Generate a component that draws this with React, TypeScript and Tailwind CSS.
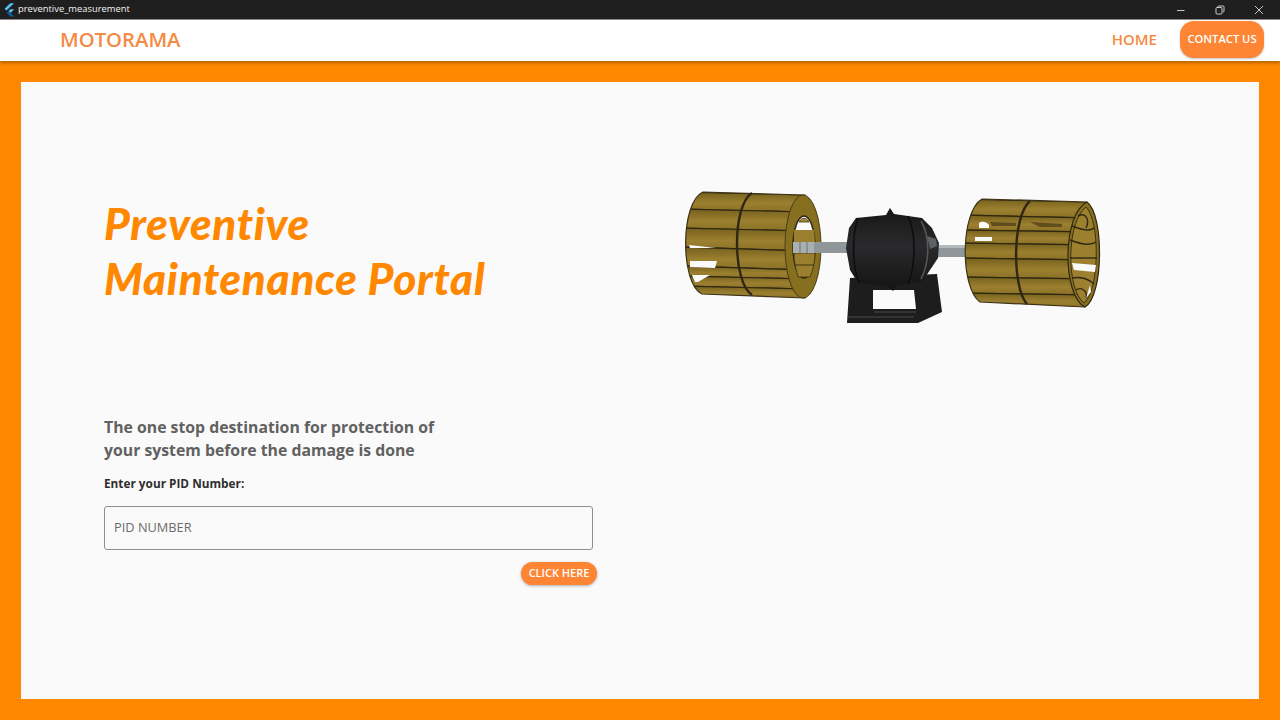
// y of each blade edge at the back and at the front of the wheel
const leftBands = [
  [192, 195],
  [209, 212],
  [228, 231],
  [247, 251],
  [266, 270],
  [276, 279],
  [286, 289],
  [296, 299],
];
const rightBands = [
  [199, 202],
  [215, 218],
  [230, 232],
  [243, 245],
  [258, 260],
  [277, 279],
  [293, 295],
  [303, 308],
];
const rightInner = [
  'M1078 216 C1086 212 1090 220 1086 228',
  'M1072 226 C1082 230 1090 232 1094 228',
  'M1070 240 C1080 244 1090 246 1096 242',
  'M1070 258 L1097 258',
  'M1072 278 C1082 276 1090 280 1094 284',
  'M1076 290 C1082 286 1088 292 1086 298',
];

function Bands({ bands, x1, x2 }: { bands: number[][]; x1: number; x2: number }) {
  return (
    <>
      {bands.slice(0, -1).map((b, i) => {
        const next = bands[i + 1];
        return (
          <path
            key={b[0]}
            d={`M${x1} ${b[0]} L${x2} ${b[1]} L${x2} ${next[1]} L${x1} ${next[0]} Z`}
            fill="url(#blade)"
            stroke="#2f2711"
            strokeWidth="1.2"
          />
        );
      })}
    </>
  );
}

function BlowerArt() {
  return (
    <svg viewBox="680 185 430 145" className="h-[145px] w-[430px] shrink-0">
      <defs>
        <linearGradient id="blade" x1="0" y1="0" x2="0" y2="1">
          <stop offset="0" stopColor="#75601d" />
          <stop offset="0.55" stopColor="#9c8030" />
          <stop offset="1" stopColor="#8a7026" />
        </linearGradient>
        <linearGradient id="motor" x1="0" y1="0" x2="0" y2="1">
          <stop offset="0" stopColor="#161617" />
          <stop offset="0.45" stopColor="#2a2a2c" />
          <stop offset="1" stopColor="#131314" />
        </linearGradient>
        <clipPath id="leftBody">
          <path d="M703 192 L805 195 L805 298 L702 294 C680 284 680 202 703 192 Z" />
        </clipPath>
        <clipPath id="rightBody">
          <path d="M982 199 L1087 202 L1085 307 L980 302 C960 288 960 212 982 199 Z" />
        </clipPath>
      </defs>

      {/* left wheel */}
      <g clipPath="url(#leftBody)">
        <Bands bands={leftBands} x1={680} x2={806} />
      </g>
      <path d="M703 192 L805 195 L805 298 L702 294 C680 284 680 202 703 192 Z" fill="none" stroke="#3d3216" strokeWidth="1.2" />
      <path d="M690 261 L717 261 L715 268 L690 267 Z" fill="#fafafa" />
      <path d="M692 275 L710 275 L698 282 L695 282 Z" fill="#fafafa" />
      <path d="M689 245 L716 248 L690 248 Z" fill="#fafafa" />
      <path d="M752 193 C732 205 732 282 752 295" stroke="#2f2711" strokeWidth="2.4" fill="none" />
      <ellipse cx="803" cy="246.5" rx="18" ry="51.5" fill="#86701f" stroke="#4a3c18" strokeWidth="1" />
      <ellipse cx="804" cy="247" rx="11" ry="31" fill="#fafafa" stroke="#2f2711" strokeWidth="1.5" />
      <path d="M799 222 C802 217 806 217 809 222 Z" fill="#a88b37" stroke="#3d3216" strokeWidth="0.8" />
      <path d="M794 230 L814 230 L815 242 L794 242 Z" fill="#9a7f2e" />
      <path d="M794 253 L815 253 C815 262 813 270 810 277 L798 277 C796 270 794 262 794 253 Z" fill="#9a7f2e" stroke="#3d3216" strokeWidth="0.8" />
      <path d="M795 265 L814 265" stroke="#3d3216" strokeWidth="1" />

      {/* shafts */}
      <rect x="793" y="242" width="55" height="11" fill="#8f979a" />
      <rect x="793" y="242" width="21" height="11" fill="#a9b0b2" />
      <path d="M800 242 V253 M807 242 V253" stroke="#6c7375" strokeWidth="1" />
      <rect x="934" y="245" width="36" height="12" fill="#8f979a" />
      <rect x="934" y="245" width="36" height="3" fill="#b4babc" />

      {/* base */}
      <path fillRule="evenodd" d="M850 278 L937 274 L942 312 L918 323 L847 323 Z M873 290 L914 290 L916 309 L873 309 Z" fill="#1d1d1e" />
      <path d="M874 312 L916 312 M848 317 L914 317" stroke="#4a4a4c" strokeWidth="1" />

      {/* motor */}
      <path d="M856 218 L886 215 L890 208 L894 214 L922 218 L932 228 L939 243 L938 258 L930 270 L922 282 L897 285 L893 291 L888 286 L858 283 L850 270 L846 248 L849 228 Z" fill="url(#motor)" />
      <path d="M858 218 C852 235 852 265 859 283 M908 216 C916 232 916 265 908 284" stroke="#0d0d0e" strokeWidth="1.5" fill="none" />
      <path d="M921 221 C930 236 930 262 921 279" stroke="#58585a" strokeWidth="1.5" fill="none" />
      <path d="M927 236 L936 239 L937 246 L930 249 Z" fill="#5f6062" />

      {/* right wheel */}
      <g clipPath="url(#rightBody)">
        <Bands bands={rightBands} x1={960} x2={1090} />
      </g>
      <path d="M982 199 L1087 202 M1085 307 L980 302 C960 288 960 212 982 199" fill="none" stroke="#3d3216" strokeWidth="1.2" />
      <path d="M979 223 C981 221 986 221 989 225 L989 228 L979 228 Z" fill="#fafafa" />
      <path d="M975 237 L992 237 L992 241 L975 241 Z" fill="#fafafa" />
      <path d="M990 222 L1016 223 L1016 226 L992 226 Z M1030 222 L1062 224 L1062 227 L1040 227 Z" fill="#5f4e1c" />
      <path d="M1030 201 C1012 216 1012 288 1027 304" stroke="#2f2711" strokeWidth="2.4" fill="none" />
      <path d="M1087 202 C1104 214 1104 296 1085 307 C1062 296 1062 214 1087 202 Z" fill="#86701f" stroke="#2f2711" strokeWidth="1.2" />
      <path d="M1086 207 C1100 220 1100 290 1084 303 C1066 290 1066 222 1086 207 Z" fill="#9c8030" stroke="#3d3216" strokeWidth="1" />
      {rightInner.map((d) => (
        <path key={d} d={d} stroke="#2f2711" strokeWidth="1.4" fill="none" />
      ))}
      <path d="M1072 263 L1096 265 L1095 272 L1074 270 Z" fill="#fafafa" />
      <path d="M1088 292 L1090 285 L1091 292 L1086 298 Z" fill="#fafafa" />
    </svg>
  );
}

function FlutterLogo() {
  return (
    <svg viewBox="0 0 14 16" className="h-[14px] w-[12px]">
      <path d="M8.5 0 L13 0 L4 8.5 L1.8 6.4 Z" fill="#55c4f1" />
      <path d="M8.5 7 L13 7 L8.8 11.4 L6.5 9.1 Z" fill="#55c4f1" />
      <path d="M4.4 11.2 L6.6 9 L13 15.5 L8.5 15.5 Z" fill="#0b5f9e" />
    </svg>
  );
}

export default function App() {
  return (
    <div className="flex h-screen flex-col overflow-hidden font-['Open_Sans','Noto_Sans',sans-serif]">
      <div className="flex h-5 shrink-0 items-center border-b border-[#8a8a8a] bg-[#1f1f1f] pl-[3px]">
        <FlutterLogo />
        <span className="ml-[3px] text-[9.4px] text-[#f2f2f2]">preventive_measurement</span>
        <div className="ml-auto flex items-center gap-[29px] pr-[16px] text-[#c9c9c9]">
          <svg viewBox="0 0 10 10" className="h-[10px] w-[10px]">
            <path d="M1 5.5 H8.5" stroke="currentColor" strokeWidth="1" />
          </svg>
          <svg viewBox="0 0 10 10" className="h-[10px] w-[10px]">
            <rect x="1" y="2.5" width="6" height="6.5" rx="1" fill="none" stroke="currentColor" strokeWidth="1" />
            <path d="M3 2.5 V1.5 Q3 1 4 1 H8 Q9 1 9 2 V6 Q9 7 8 7" fill="none" stroke="currentColor" strokeWidth="1" />
          </svg>
          <svg viewBox="0 0 10 10" className="h-[10px] w-[10px]">
            <path d="M1 1 L9 9 M9 1 L1 9" stroke="currentColor" strokeWidth="1" />
          </svg>
        </div>
      </div>

      <header className="z-10 flex h-[41px] shrink-0 items-center bg-white pb-[2px] pl-[60px] pr-[16px] shadow-[0_2px_3px_rgba(120,70,0,0.55)]">
        <span className="text-[20.3px] font-semibold text-[#f58a42]">MOTORAMA</span>
        <nav className="ml-auto flex items-center gap-[23px]">
          <span className="text-[15px] font-semibold text-[#f58a42]">HOME</span>
          <span className="flex h-[37px] w-[84px] items-center justify-center rounded-[14px] bg-[#fd8534] text-[11.2px] font-semibold text-white shadow-[0_1px_2px_rgba(0,0,0,0.25)]">
            CONTACT US
          </span>
        </nav>
      </header>

      <main className="min-h-0 flex-1 bg-[#ff8800] p-[21px]">
        <div className="flex h-full bg-[#fafafa] pl-[83px] pt-[114px]">
          <div className="w-[494px] shrink-0">
            <h1 className="font-['Lato',sans-serif] text-[44px] font-black italic leading-[55px] tracking-[0.7px] text-[#ff8800]">
              Preventive
              <br />
              Maintenance Portal
            </h1>
            <p className="mt-[110px] text-[15.8px] font-bold leading-[23px] text-[#616161]">
              The one stop destination for protection of
              <br />
              your system before the damage is done
            </p>
            <p className="mt-[12px] text-[11.8px] font-bold leading-[18px] text-[#2e2e2e]">Enter your PID Number:</p>
            <div className="mt-[14px] flex h-11 w-[489px] items-center rounded-[3px] border border-[#8f8f8f] pl-[9px]">
              <span className="text-[12.8px] text-[#6b6b6b]">PID NUMBER</span>
            </div>
            <div className="mt-3 flex justify-end pr-px">
              <span className="flex h-[23px] w-[76px] items-center justify-center rounded-full bg-[#fd8534] text-[11px] font-semibold text-white shadow-[0_1px_3px_rgba(0,0,0,0.3)]">
                CLICK HERE
              </span>
            </div>
          </div>
          <div className="-mt-[11px] ml-[82px]">
            <BlowerArt />
          </div>
        </div>
      </main>
    </div>
  );
}
